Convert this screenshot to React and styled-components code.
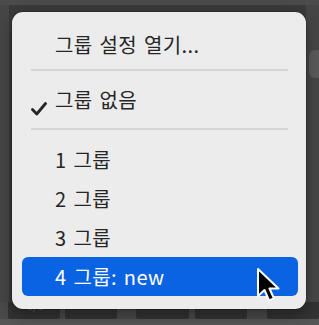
import React from 'react';
import styled, { createGlobalStyle } from 'styled-components';

const GlobalStyle = createGlobalStyle`
  html, body {
    margin: 0;
    padding: 0;
    background: #3c3c3c;
  }
  body {
    font-family: "Noto Sans CJK KR", "Noto Sans", sans-serif;
  }
`;

const Screen = styled.div`
  position: relative;
  width: 319px;
  height: 325px;
  overflow: hidden;
  background: #3b3b3b;
  display: flex;
  flex-direction: column;
`;

const TopStrip = styled.div`
  height: 5px;
  background: #4b4b4b;
  flex-shrink: 0;
`;

const Middle = styled.div`
  flex: 1;
  display: flex;
`;

const SideColumn = styled.div`
  width: ${(p) => p.$w}px;
  background: #464646;
  border-right: ${(p) => (p.$line ? '1px solid #3a3a3a' : 'none')};
  display: flex;
  flex-direction: column;
  padding-top: 45px;
  box-sizing: border-box;
`;

const Knob = styled.div`
  height: 28px;
  margin-left: 3px;
  border-radius: 6px 0 0 6px;
  background: #5a5a5a;
`;

const Center = styled.div`
  flex: 1;
  background: #3a3a3a;
`;

const TileRow = styled.div`
  height: 17px;
  display: flex;
  background: #4a4a4a;
  padding: 0 0 0 8px;
  border-bottom: 6px solid #575757;
  flex-shrink: 0;
`;

const Tile = styled.div`
  width: 62px;
  margin-right: ${(p) => p.$gap}px;
  background: #333333;
  border-radius: 0 0 2px 2px;
  color: #6a6a6a;
  font-size: 11px;
  padding-left: 19px;
  box-sizing: border-box;
  line-height: 6px;
`;

const Menu = styled.div`
  position: absolute;
  left: 12px;
  top: 12px;
  width: 294px;
  height: 297px;
  box-sizing: border-box;
  padding: 13px 8px 12px 10px;
  background: #ececec;
  border-radius: 11px;
  box-shadow: 0 0 0 0.5px rgba(0, 0, 0, 0.35), 0 6px 16px rgba(0, 0, 0, 0.35);
  display: flex;
  flex-direction: column;
`;

const Item = styled.div`
  height: 39px;
  flex-shrink: 0;
  display: flex;
  align-items: center;
  padding-left: 33px;
  position: relative;
  border-radius: 6px;
  font-size: 20px;
  letter-spacing: 0.4px;
  word-spacing: 2px;
  color: ${(p) => (p.$active ? '#ffffff' : '#262626')};
  background: ${(p) => (p.$active ? '#0a63e3' : 'transparent')};
`;

const Check = styled.span`
  position: absolute;
  left: 9px;
  top: 13px;
  width: 16px;
  height: 14px;
`;

const Separator = styled.div`
  height: 2px;
  background: #d5d5d5;
  margin: ${(p) => p.$top}px 10px ${(p) => p.$bottom}px 9px;
  flex-shrink: 0;
`;

const Cursor = styled.svg`
  position: absolute;
  left: 255px;
  top: 267px;
`;

export default function App() {
  return (
    <>
      <GlobalStyle />
      <Screen>
        <TopStrip />
        <Middle>
          <SideColumn $w={10} $line />
          <Center />
          <SideColumn $w={13}>
            <Knob />
          </SideColumn>
        </Middle>
        <TileRow>
          <Tile $gap={5}>0/0</Tile>
          <Tile $gap={19} />
          <Tile $gap={6} />
          <Tile $gap={20} />
          <Tile $gap={0} />
        </TileRow>

        <Menu>
          <Item>그룹 설정 열기...</Item>
          <Separator $top={5} $bottom={9} />
          <Item>
            <Check>
              <svg width="16" height="14" viewBox="0 0 16 14">
                <path d="M1.5 7.5 L5.8 12 L14.5 1.5" fill="none" stroke="#262626" strokeWidth="2.8" strokeLinecap="round" strokeLinejoin="round" />
              </svg>
            </Check>
            그룹 없음
          </Item>
          <Separator $top={9} $bottom={10} />
          <Item>1 그룹</Item>
          <Item>2 그룹</Item>
          <Item>3 그룹</Item>
          <Item $active>4 그룹: new</Item>
        </Menu>

        <Cursor width="30" height="38" viewBox="0 0 30 38">
          <path d="M3 2 L3 29 L9.5 23 L14 33.5 L19 31.5 L14.5 21.5 L23.5 21.5 Z" fill="#000" stroke="#fff" strokeWidth="2" strokeLinejoin="round" />
        </Cursor>
      </Screen>
    </>
  );
}
